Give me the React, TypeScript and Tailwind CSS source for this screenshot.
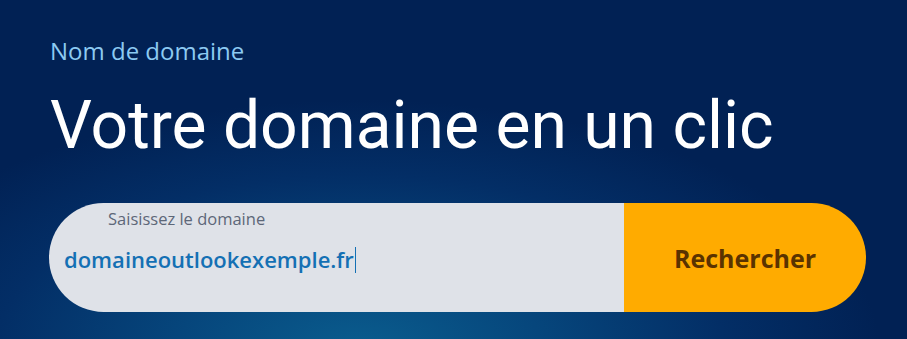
import React from 'react';

const App: React.FC = () => {
  return (
    <div className="relative w-[907px] h-[339px] overflow-hidden bg-[#012154] bg-[radial-gradient(ellipse_520px_250px_at_360px_350px,#0a5d8e_0%,#06467c_35%,#032e66_70%,#012154_100%)]">
      <div className="pl-[50px] pt-[36px]">
        <p className="text-[24px] leading-[29px] text-[#8ccaf2] font-['Open_Sans',sans-serif]">
          Nom de domaine
        </p>
        <h1 className="mt-[21px] text-[66px] leading-[80px] text-white font-['Roboto',sans-serif]">
          Votre domaine en un clic
        </h1>
      </div>

      <form
        className="mt-[37px] ml-[49px] flex w-[817px] h-[109px] rounded-full overflow-hidden"
        onSubmit={(e) => e.preventDefault()}
      >
        <label className="relative flex-1 bg-[#dfe2e8] font-['Open_Sans',sans-serif]">
          <span className="absolute left-[59px] top-[4px] text-[16.5px] text-[#5d6778]">
            Saisissez le domaine
          </span>
          <span className="absolute left-[15px] top-[40px] flex items-center text-[22px] font-semibold text-[#1470b4]">
            domaineoutlookexemple.fr
            <span className="ml-[1px] inline-block w-[1px] h-[26px] bg-[#1470b4]" />
          </span>
        </label>
        <button
          type="submit"
          className="w-[242px] pt-[3px] bg-[#ffab00] text-[25px] font-bold text-[#5a3300] font-['Open_Sans',sans-serif]"
        >
          Rechercher
        </button>
      </form>
    </div>
  );
};

export default App;
